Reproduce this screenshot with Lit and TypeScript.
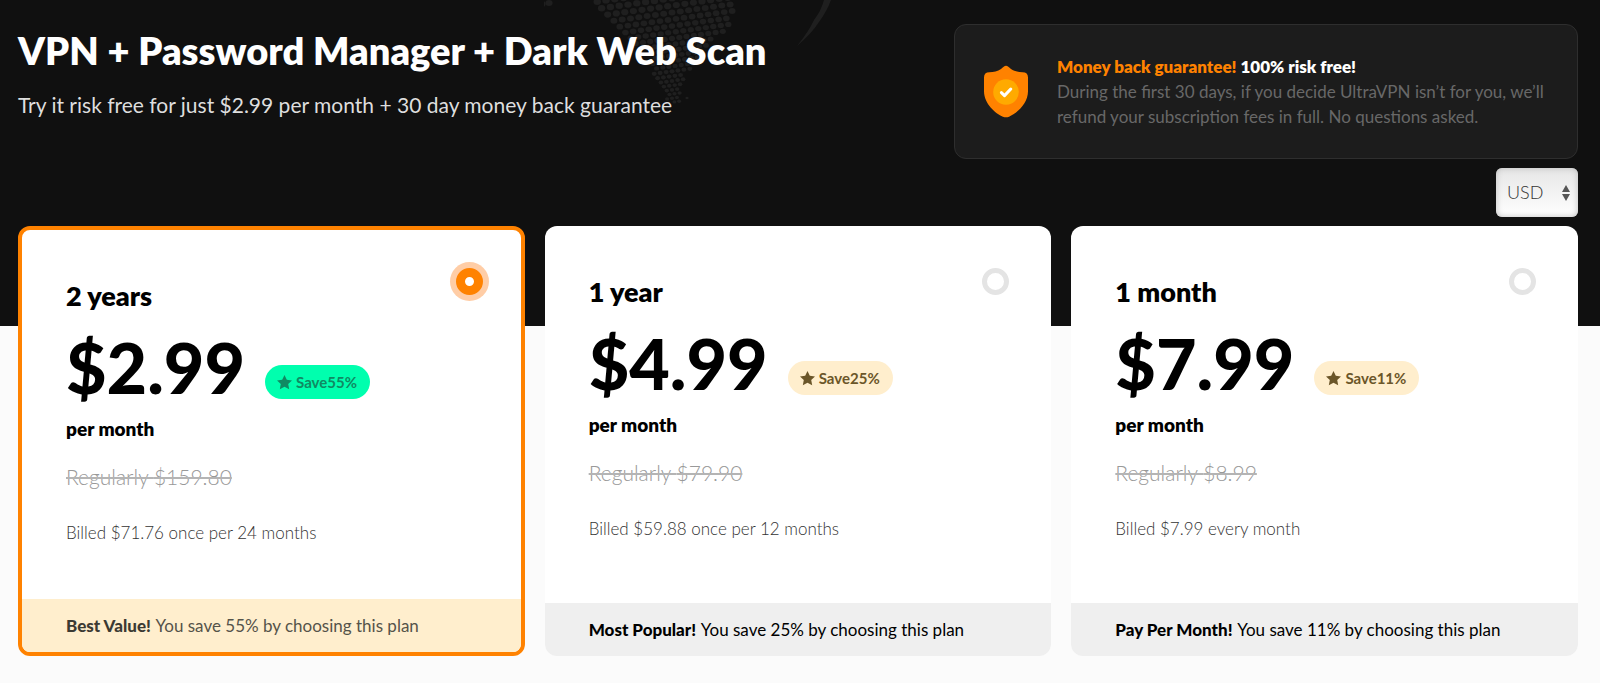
import { LitElement, html, svg, css } from 'lit';
import { customElement, property, state } from 'lit/decorators.js';
import { classMap } from 'lit/directives/class-map.js';

interface Plan {
  id: string;
  name: string;
  price: string;
  save: string;
  regular: string;
  billed: string;
  tag: string;
  best?: boolean;
}

const PLANS: Plan[] = [
  { id: 'y2', name: '2 years', price: '$2.99', save: '55%', regular: '$159.80', billed: 'Billed $71.76 once per 24 months', tag: 'Best Value!', best: true },
  { id: 'y1', name: '1 year', price: '$4.99', save: '25%', regular: '$79.90', billed: 'Billed $59.88 once per 12 months', tag: 'Most Popular!' },
  { id: 'm1', name: '1 month', price: '$7.99', save: '11%', regular: '$8.99', billed: 'Billed $7.99 every month', tag: 'Pay Per Month!' },
];

/* Outline of the continent that the dot pattern fills. */
const LAND: [number, number][] = [
  [44, -10], [54, 10], [70, 24], [82, 34], [96, 48], [108, 62], [108, 80], [118, 88],
  [124, 102], [138, 104], [137, 88], [143, 72], [157, 60], [172, 38], [186, 28], [187, 18], [194, -10],
];

const inLand = (x: number, y: number) => {
  let inside = false;
  for (let i = 0, j = LAND.length - 1; i < LAND.length; j = i++) {
    const [xi, yi] = LAND[i];
    const [xj, yj] = LAND[j];
    if (yi > y !== yj > y && x < ((xj - xi) * (y - yi)) / (yj - yi) + xi) inside = !inside;
  }
  return inside;
};

/* Dots shrink towards the south, as on the far side of a globe. */
const landDots = () => {
  const dots: { x: number; y: number; r: number }[] = [];
  let base = -16;
  for (let row = 0; base < 140; row++) {
    const k = Math.max(0.5, 1 - Math.max(base, 0) / 220);
    const pitch = 8.8 * k;
    for (let n = -18; n <= 18; n++) {
      const dx = (n + (row % 2) / 2) * pitch;
      const x = 128 + dx;
      const y = base - dx * 0.14;
      if (inLand(x, y)) dots.push({ x, y, r: 3.7 * k });
    }
    base += 7.2 * k;
  }
  return dots;
};

@customElement('plan-card')
export class PlanCard extends LitElement {
  @property({ attribute: false }) plan!: Plan;
  @property({ type: Boolean }) selected = false;

  static styles = css`
    :host { display: grid; }
    .card {
      display: flex;
      flex-direction: column;
      box-sizing: border-box;
      background: #fff;
      border-radius: 12px;
      overflow: hidden;
      cursor: pointer;
    }
    .card.selected { border: 4px solid #ff8200; }
    .body { flex: 1; padding: 42px 42px 54px 44px; }
    .head { display: flex; justify-content: space-between; align-items: flex-start; }
    .name { margin-top: 6px; font-size: 27px; line-height: 36px; font-weight: 800; }
    .radio {
      appearance: none;
      box-sizing: border-box;
      width: 27px;
      height: 27px;
      margin: 0;
      border: 5px solid #e4e4e4;
      border-radius: 50%;
      background: #fff;
    }
    .radio:checked {
      margin: -4px -4px 0 0;
      border: 9px solid #ff8200;
      box-shadow: 0 0 0 6px #ffcda6;
    }
    .offer { display: flex; align-items: flex-end; gap: 20px; margin-top: 11px; }
    .price { font-size: 70px; line-height: 84px; font-weight: 900; }
    .badge {
      display: flex;
      align-items: center;
      gap: 4px;
      height: 34px;
      margin-bottom: 10px;
      padding: 0 13px 0 12px;
      border-radius: 17px;
      background: #ffeecd;
      color: #6b5629;
      font-size: 15px;
      font-weight: 700;
    }
    .best .badge { background: #00ffae; color: #108a63; }
    .star { width: 15px; height: 15px; fill: currentColor; }
    .per { margin-top: 8px; font-size: 19px; line-height: 24px; font-weight: 800; }
    .regular { display: block; margin-top: 24px; font-size: 21px; line-height: 24px; font-weight: 300; color: #999; text-decoration-color: #b4b4b4; }
    .billed { margin-top: 32px; font-size: 17px; line-height: 24px; font-weight: 300; color: #333; }
    .note { padding: 15px 44px 14px; background: #efefef; font-size: 17px; line-height: 24px; font-weight: 400; }
    .best .note { background: #ffeecd; color: #55534a; }
    .best .note b { color: #3c3a33; }
    .note b { margin-right: 1px; font-weight: 900; }
  `;

  private pick() {
    this.dispatchEvent(new CustomEvent('pick', { detail: this.plan.id }));
  }

  render() {
    const p = this.plan;
    return html`
      <label class=${classMap({ card: true, selected: this.selected, best: !!p.best })}>
        <div class="body">
          <div class="head">
            <span class="name">${p.name}</span>
            <input class="radio" type="radio" name="plan" .value=${p.id} .checked=${this.selected} @change=${this.pick} />
          </div>
          <div class="offer">
            <span class="price">${p.price}</span>
            <span class="badge">
              <svg class="star" viewBox="0 0 15 15" aria-hidden="true">
                <path d="M7.500 0 9.800 4.700l5.200.7-3.800 3.600 1 5.300-4.700-2.600-4.700 2.600 1-5.300L0 5.400l5.200-.7z" />
              </svg>
              <span>Save${p.save}</span>
            </span>
          </div>
          <div class="per">per month</div>
          <s class="regular">Regularly ${p.regular}</s>
          <div class="billed">${p.billed}</div>
        </div>
        <div class="note"><b>${p.tag}</b> You save ${p.save} by choosing this plan</div>
      </label>
    `;
  }
}

@customElement('app-root')
export class AppRoot extends LitElement {
  @state() private chosen = 'y2';

  static styles = css`
    :host {
      display: block;
      min-height: 100vh;
      box-sizing: border-box;
      padding-bottom: 27px;
      background: #fbfbfb;
      color: #000;
      font-family: Lato, "Liberation Sans", sans-serif;
    }
    .hero {
      position: relative;
      overflow: hidden;
      padding: 24px 22px 109px 18px;
      background: #101010;
    }
    .map { position: absolute; top: 0; left: 34%; width: 300px; height: 120px; fill: #1f1f1f; }
    .top { position: relative; display: grid; grid-template-columns: 3fr 2fr; }
    .title { margin: 0; font-size: 38px; line-height: 52px; font-weight: 800; color: #fff; }
    .lead { margin: 15px 0 0; font-size: 21px; line-height: 28px; color: #dedede; }
    .guarantee {
      display: flex;
      align-items: center;
      gap: 28px;
      box-sizing: border-box;
      padding: 29px 28px;
      border: 1px solid #2e2e2e;
      border-radius: 12px;
      background: #1c1c1c;
      color: #686868;
      font-size: 17px;
      line-height: 25px;
    }
    .shield { flex: none; width: 46px; height: 53px; }
    .guarantee p { margin: 0; }
    .promise { font-weight: 800; color: #fff; }
    .accent { color: #ff8200; }
    .tools { position: relative; display: flex; justify-content: flex-end; margin-top: 9px; }
    .currency { display: grid; align-items: center; }
    .currency > * { grid-area: 1 / 1; }
    .select {
      appearance: none;
      box-sizing: border-box;
      height: 49px;
      margin: 0;
      padding: 0 34px 2px 11px;
      border: 0;
      border-radius: 6px;
      background: linear-gradient(#e6e6e6, #fff);
      box-shadow: inset 0 0 6px #bdbdbd;
      color: #333;
      font: 300 18px/24px Lato, "Liberation Sans", sans-serif;
    }
    .arrows { justify-self: end; width: 8px; height: 16px; margin-right: 8px; fill: #555; pointer-events: none; }
    .plans {
      position: relative;
      display: grid;
      grid-template-columns: repeat(3, 1fr);
      gap: 20px;
      margin-top: -100px;
      padding: 0 22px 0 18px;
    }
  `;

  private map() {
    return html`
      <svg class="map" viewBox="0 0 300 120" aria-hidden="true">
        ${landDots().map((d) => svg`<ellipse cx=${d.x.toFixed(1)} cy=${d.y.toFixed(1)} rx=${d.r.toFixed(2)} ry=${(d.r * 0.86).toFixed(2)} />`)}
        <ellipse cx="-2" cy="4" rx="3.6" ry="3" />
        <ellipse cx="5" cy="3" rx="3.6" ry="3" />
        <ellipse cx="143" cy="98" rx="1.6" ry="1.2" />
        <path d="M280 0h7q-4 11-12 22-7 11-22 24 12-15 17-26 7-9 10-20z" />
      </svg>
    `;
  }

  render() {
    return html`
      <header class="hero">
        ${this.map()}
        <div class="top">
          <div>
            <h1 class="title">VPN + Password Manager + Dark Web Scan</h1>
            <p class="lead">Try it risk free for just $2.99 per month + 30 day money back guarantee</p>
          </div>
          <section class="guarantee">
            <svg class="shield" viewBox="0 0 46 53" aria-hidden="true">
              <path fill="#ff8200" d="M23 .8c1.5 0 3 1.800 5 3.200 3.300 2.300 7.500 3.200 11.600 3.200 3.600 0 5.400 1.800 5.400 5.300v13.700c0 12.500-11.500 22.200-18.900 25.500q-3.100 1.300-6.200 0C12.500 48.400 1 38.700 1 26.200V12.500C1 9 2.800 7.200 6.400 7.200c4.100 0 8.300-.9 11.600-3.200 2-1.400 3.500-3.200 5-3.200z" />
              <circle cx="23" cy="27" r="12.800" fill="#ffaa00" />
              <path fill="none" stroke="#fff" stroke-width="3" stroke-linecap="round" stroke-linejoin="round" d="m18.400 27.600 3.100 3 6.300-6.600" />
            </svg>
            <div>
              <p class="promise"><span class="accent">Money back guarantee!</span> 100% risk free!</p>
              <p>During the first 30 days, if you decide UltraVPN isn’t for you, we’ll refund your subscription fees in full. No questions asked.</p>
            </div>
          </section>
        </div>
        <div class="tools">
          <div class="currency">
            <select class="select" aria-label="Currency"><option>USD</option></select>
            <svg class="arrows" viewBox="0 0 8 16" aria-hidden="true"><path d="M4 0l4 7H0zM0 9h8l-4 7z" /></svg>
          </div>
        </div>
      </header>
      <main class="plans">
        ${PLANS.map((p) => html`
          <plan-card .plan=${p} .selected=${this.chosen === p.id} @pick=${(e: CustomEvent) => (this.chosen = e.detail)}></plan-card>
        `)}
      </main>
    `;
  }
}
